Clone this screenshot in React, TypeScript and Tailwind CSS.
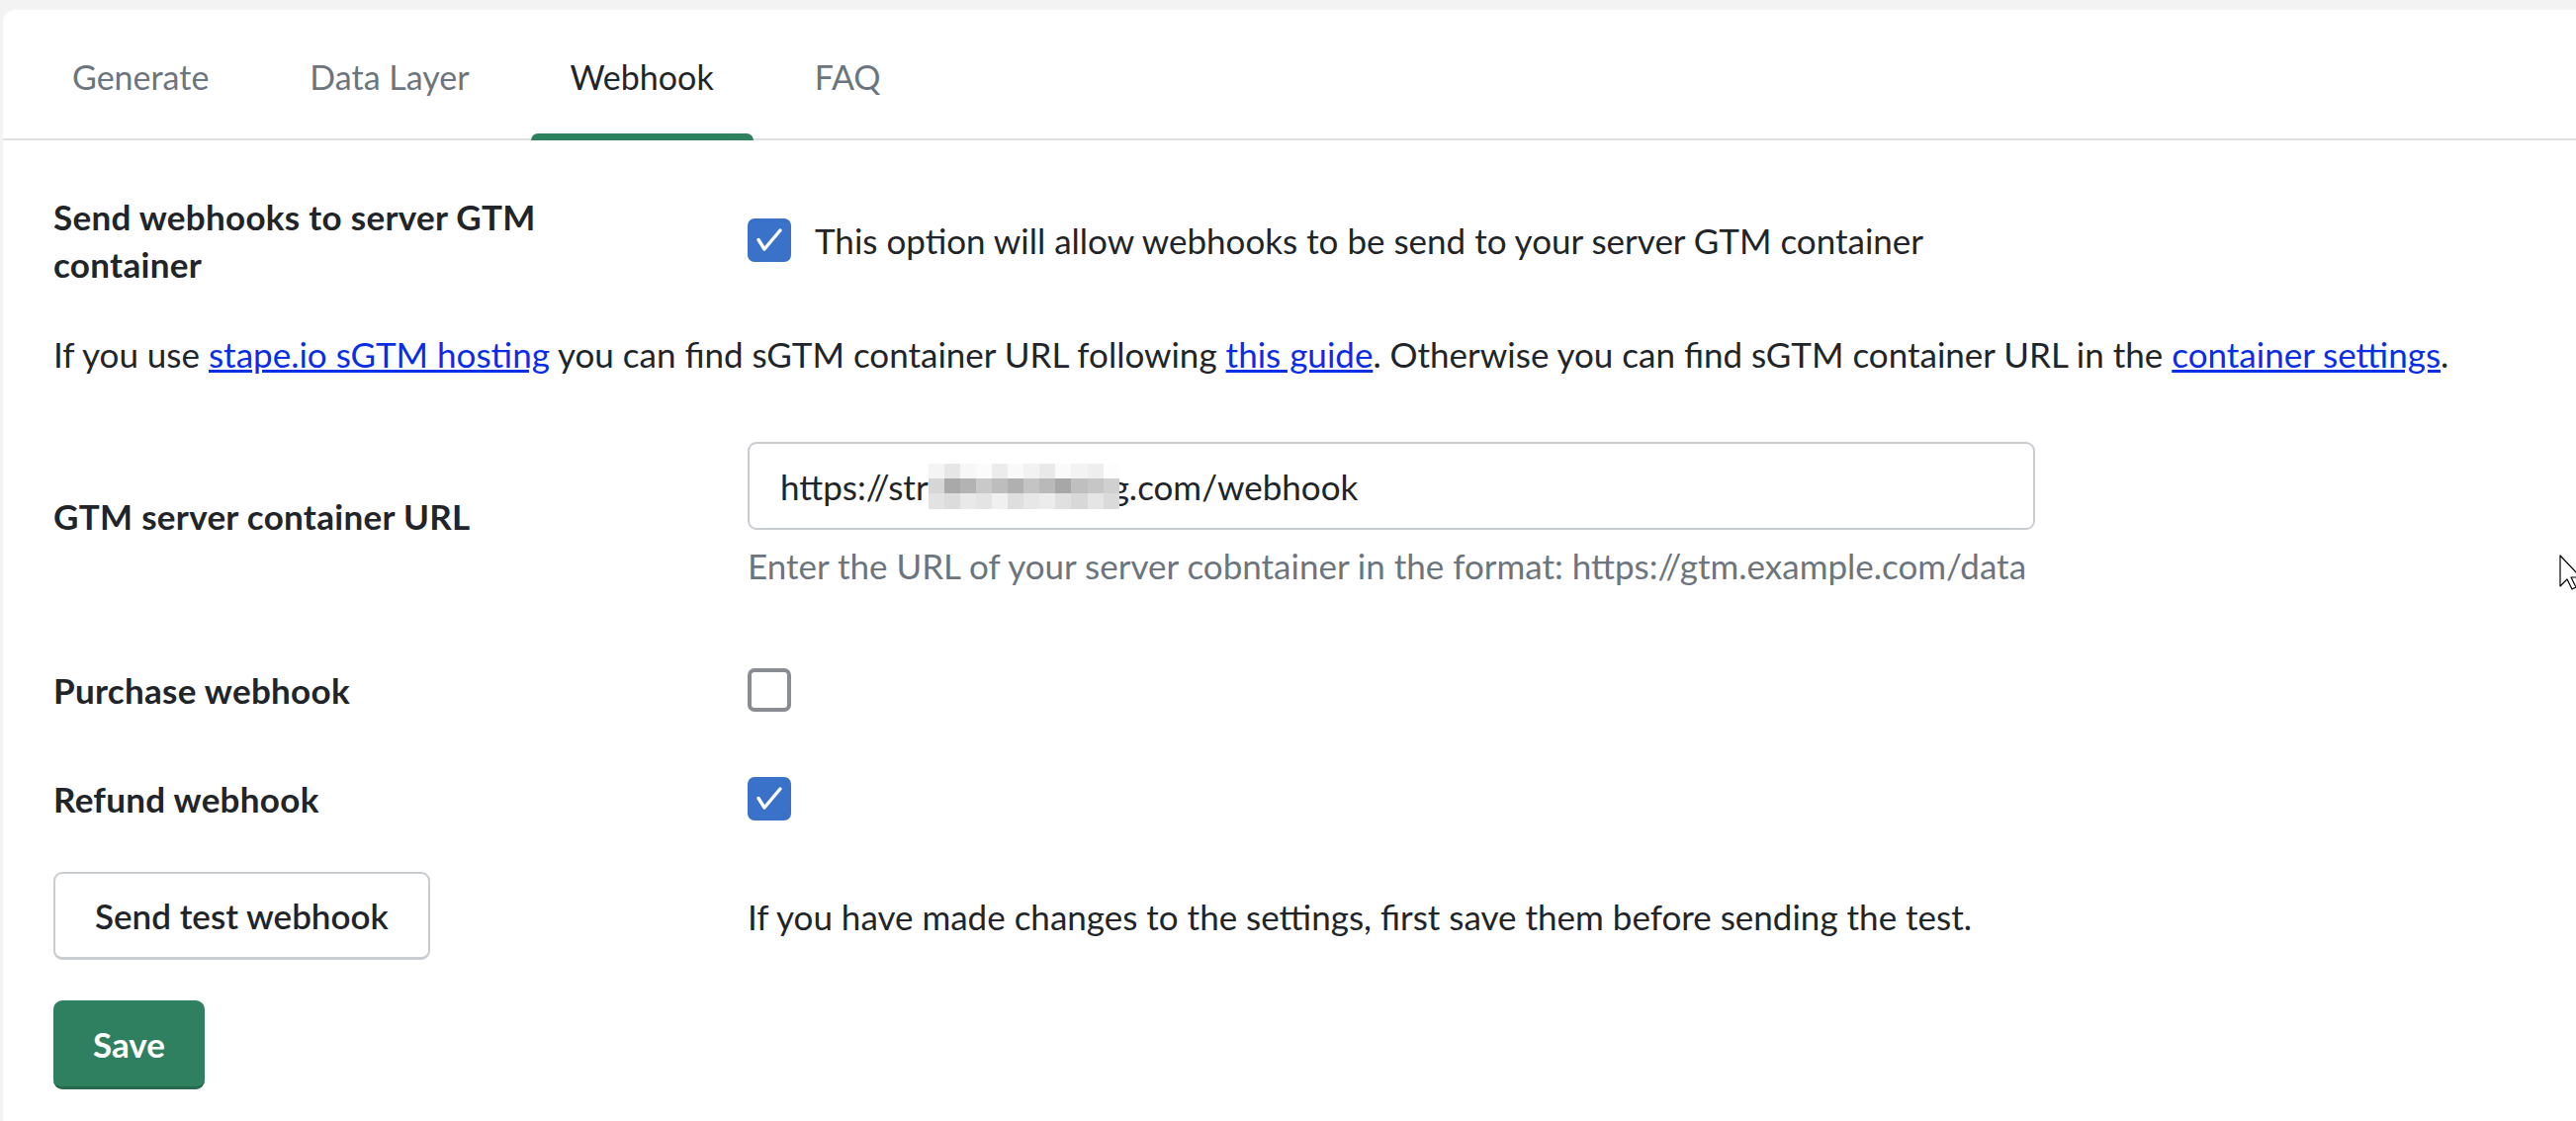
import React from 'react'

const tabs = ['Generate', 'Data Layer', 'Webhook', 'FAQ']

// pixelated censor block over the URL
const blurCells = [
  'bg-[#f4f4f4]', 'bg-[#e6e6e6]', 'bg-[#f7f7f7]', 'bg-[#fbfbfb]', 'bg-[#ececec]', 'bg-[#f9f9f9]', 'bg-[#f2f2f2]', 'bg-[#e9e9e9]', 'bg-[#fafafa]', 'bg-[#f3f3f3]', 'bg-[#eeeeee]', 'bg-[#fdfdfd]',
  'bg-[#d6d6d6]', 'bg-[#a9a9a9]', 'bg-[#b3b3b3]', 'bg-[#c9c9c9]', 'bg-[#bdbdbd]', 'bg-[#b0b0b0]', 'bg-[#c4c4c4]', 'bg-[#b9b9b9]', 'bg-[#a7a7a7]', 'bg-[#bfbfbf]', 'bg-[#c6c6c6]', 'bg-[#d0d0d0]',
  'bg-[#e2e2e2]', 'bg-[#dcdcdc]', 'bg-[#e9e9e9]', 'bg-[#e4e4e4]', 'bg-[#f0f0f0]', 'bg-[#dedede]', 'bg-[#e7e7e7]', 'bg-[#ececec]', 'bg-[#e0e0e0]', 'bg-[#d8d8d8]', 'bg-[#e5e5e5]', 'bg-[#dadada]',
]

const Checkbox = ({ checked }: { checked: boolean }) =>
  checked ? (
    <div className="h-[44px] w-[44px] rounded-[7px] bg-[#3b72c9]">
      <svg viewBox="0 0 44 44" className="h-[44px] w-[44px]">
        <path d="M11 21.5 L17 31 L33 12" fill="none" stroke="white" strokeWidth="3.4" strokeLinecap="round" strokeLinejoin="round" />
      </svg>
    </div>
  ) : (
    <div className="h-[44px] w-[44px] rounded-[7px] border-[4px] border-[#898c91] bg-white" />
  )

const App = () => {
  return (
    <div className="relative h-screen w-full overflow-hidden bg-[#f3f3f3] font-['Lato',sans-serif] text-[35px] leading-[48px] text-[#212529]">
      {/* card */}
      <div className="ml-[3px] mt-[10px] h-full rounded-tl-[12px] bg-white">
        {/* tabs */}
        <div className="flex h-[132px] items-stretch gap-[22px] border-b-2 border-[#dfdfdf] pl-[30px] pt-[6px] text-[34px]">
          {tabs.map((t) => (
            <div
              key={t}
              className={`relative flex items-center px-[40px] ${t === 'Webhook' ? 'text-[#212529]' : 'text-[#6c757d]'}`}
            >
              {t}
              {t === 'Webhook' && (
                <span className="absolute bottom-[-2px] left-0 right-0 h-[7px] rounded-t-[8px] bg-[#2f8060]" />
              )}
            </div>
          ))}
        </div>

        {/* form */}
        <div className="pl-[51px]">
          {/* send webhooks */}
          <div className="mt-[53px] grid grid-cols-[702px_1fr] items-center">
            <div className="max-w-[560px] font-bold tracking-[0.3px]">Send webhooks to server GTM container</div>
            <div className="flex items-center gap-[24px]">
              <Checkbox checked />
              <span>This option will allow webhooks to be send to your server GTM container</span>
            </div>
          </div>

          <p className="mt-[43px]">
            If you use <a href="#" className="text-[#0a2ee6] underline">stape.io sGTM hosting</a> you can find sGTM
            container URL following <a href="#" className="text-[#0a2ee6] underline">this guide</a>. Otherwise you can
            find sGTM container URL in the <a href="#" className="text-[#0a2ee6] underline">container settings</a>.
          </p>

          {/* container url */}
          <div className="mt-[65px] grid grid-cols-[702px_1fr] items-center">
            <div className="font-bold tracking-[0.3px]">GTM server container URL</div>
            <div className="flex flex-col gap-[12px]">
              <div className="flex h-[89px] w-[1302px] items-center rounded-[9px] border-2 border-[#c9cdd2] px-[31px]">
                <span>https://str</span>
                <span className="relative z-10 -mr-[8px] grid h-[46px] w-[193px] grid-cols-12">
                  {blurCells.map((c, i) => (
                    <span key={i} className={c} />
                  ))}
                </span>
                <span>g.com/webhook</span>
              </div>
              <div className="text-[#6c757d]">Enter the URL of your server cobntainer in the format: https://gtm.example.com/data</div>
            </div>
          </div>

          {/* purchase */}
          <div className="mt-[78px] grid grid-cols-[702px_1fr] items-center">
            <div className="font-bold tracking-[0.3px]">Purchase webhook</div>
            <Checkbox checked={false} />
          </div>

          {/* refund */}
          <div className="mt-[62px] grid grid-cols-[702px_1fr] items-center">
            <div className="font-bold tracking-[0.3px]">Refund webhook</div>
            <Checkbox checked />
          </div>

          {/* test */}
          <div className="mt-[50px] grid grid-cols-[702px_1fr] items-center">
            <div>
              <button className="h-[89px] rounded-[9px] border-2 border-b-[3px] border-[#c9ccd0] bg-white px-[40px] font-semibold">
                Send test webhook
              </button>
            </div>
            <div>If you have made changes to the settings, first save them before sending the test.</div>
          </div>

          <button className="mt-[41px] h-[90px] rounded-[9px] border-b-[3px] border-[#276a4f] bg-[#2f8060] px-[40px] font-bold text-white">
            Save
          </button>
        </div>
      </div>

      {/* mouse pointer at the right edge */}
      <svg viewBox="0 0 24 36" className="absolute left-[2588px] top-[561px] h-[36px] w-[24px]">
        <path d="M1 1 L1 32 L8 25 L13 35 L17 33 L12 23 L22 23 Z" fill="white" stroke="black" strokeWidth="1.2" strokeLinejoin="round" />
      </svg>
    </div>
  )
}

export default App
